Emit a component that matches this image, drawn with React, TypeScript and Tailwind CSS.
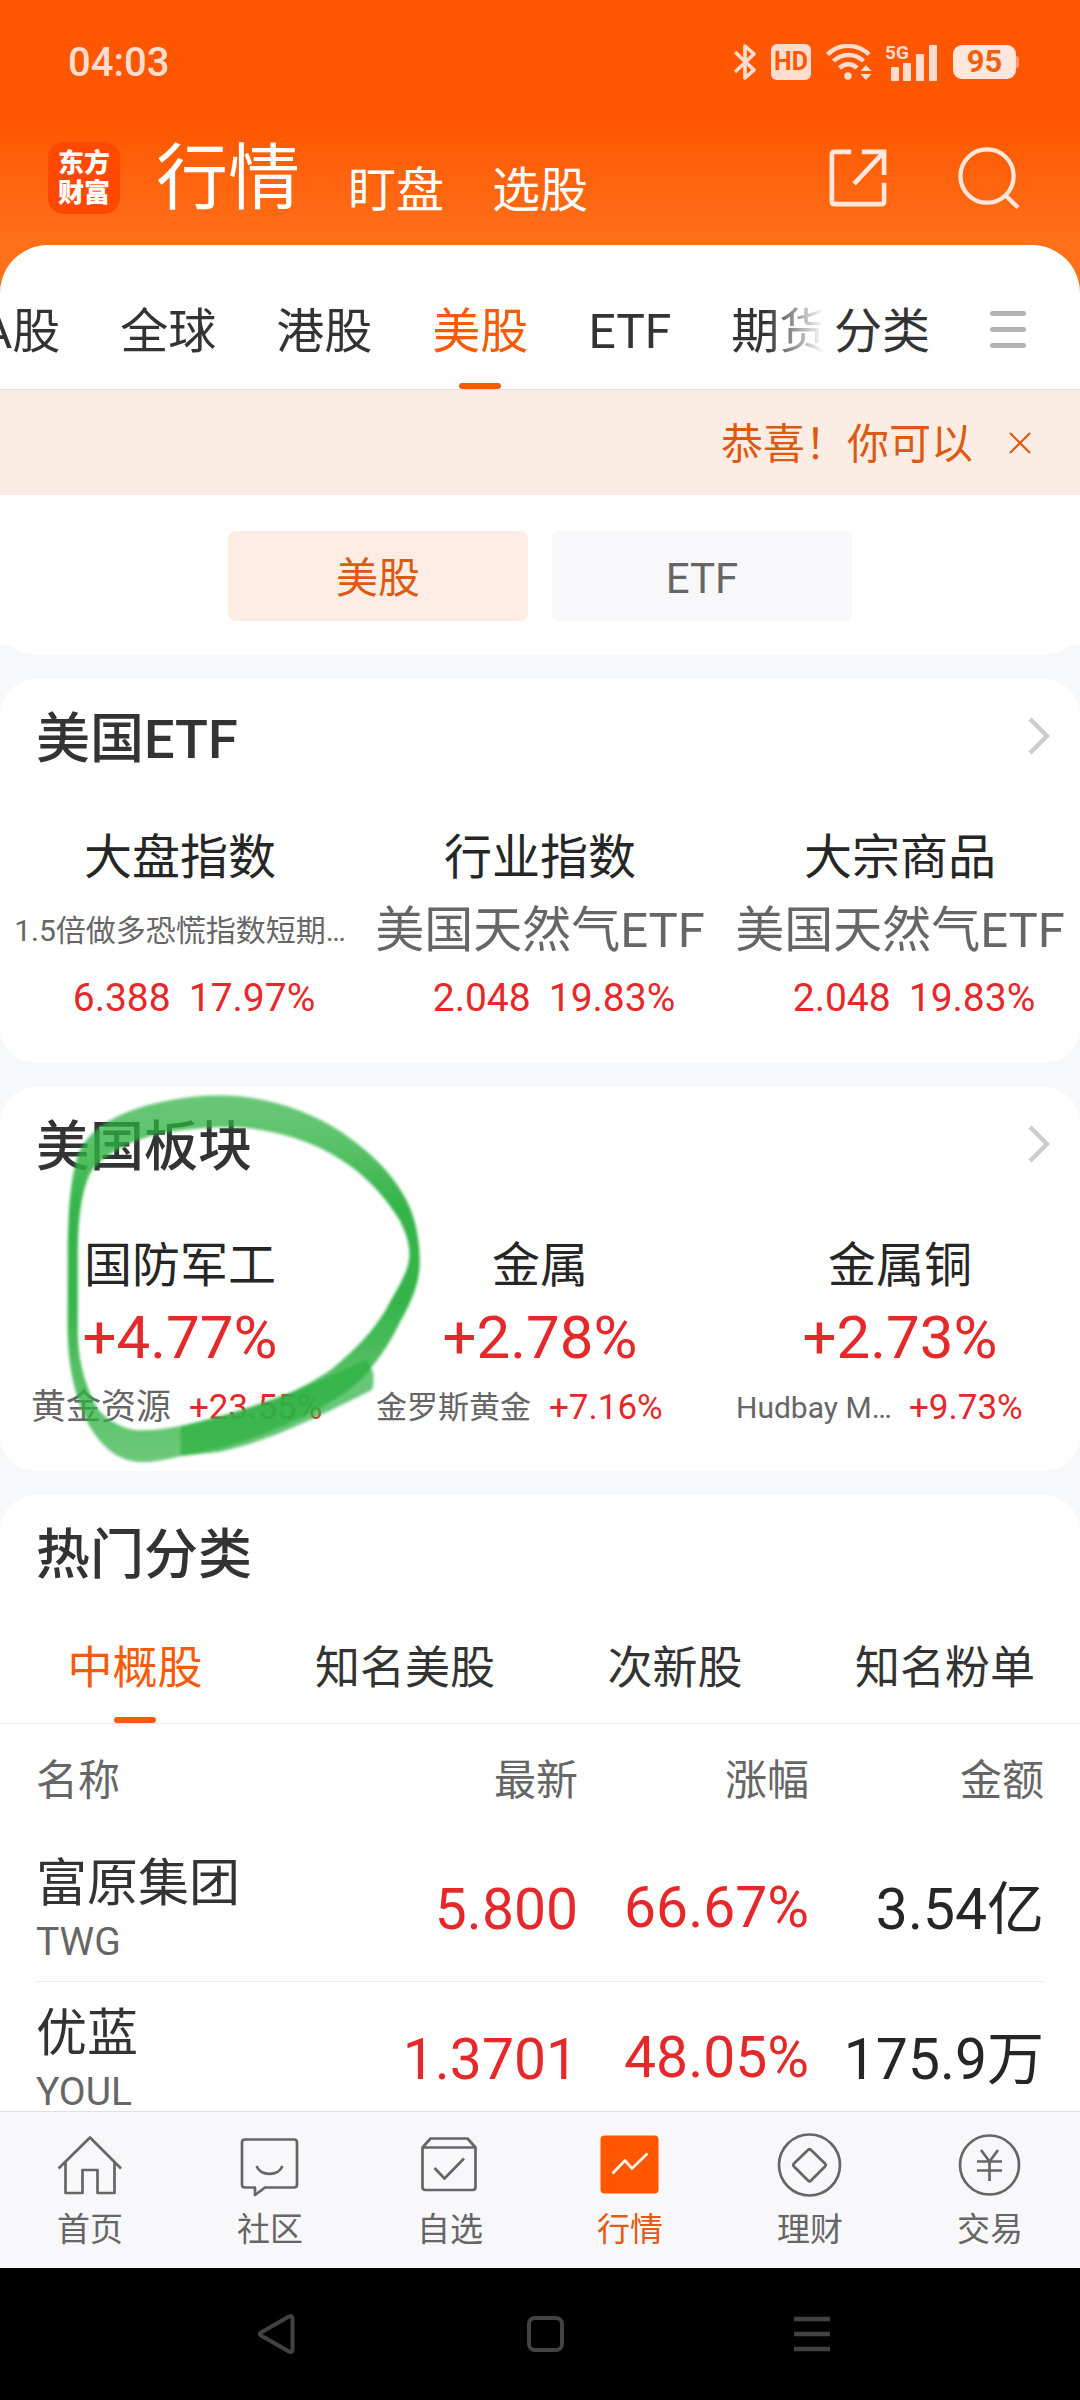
import React from 'react';

const RED = 'text-[#e5292a]';

interface EtfItem {
    title: string;
    name: string;
    small?: boolean;
    price: string;
    change: string;
}

const etfs: EtfItem[] = [
    { title: '大盘指数', name: '1.5倍做多恐慌指数短期…', small: true, price: '6.388', change: '17.97%' },
    { title: '行业指数', name: '美国天然气ETF', price: '2.048', change: '19.83%' },
    { title: '大宗商品', name: '美国天然气ETF', price: '2.048', change: '19.83%' },
];

const sectors = [
    { title: '国防军工', change: '+4.77%', leader: '黄金资源', leaderChange: '+23.55%', size: 'text-[35px]' },
    { title: '金属', change: '+2.78%', leader: '金罗斯黄金', leaderChange: '+7.16%', size: 'text-[31px]' },
    { title: '金属铜', change: '+2.73%', leader: 'Hudbay M…', leaderChange: '+9.73%', size: 'text-[30px]' },
];

const stocks = [
    { name: '富原集团', code: 'TWG', price: '5.800', change: '66.67%', amount: '3.54亿' },
    { name: '优蓝', code: 'YOUL', price: '1.3701', change: '48.05%', amount: '175.9万' },
];

const marketTabs = ['A股', '全球', '港股', '美股', 'ETF', '期货'];
const hotTabs = ['中概股', '知名美股', '次新股', '知名粉单'];

const StatusBar: React.FC = () => (
    <div className="flex h-[124px] items-center justify-between bg-[#ff5700] pl-[68px] pr-[61px] text-[#ffdccd]">
        <span className="pt-0.5 text-[40px] font-medium">04:03</span>
        <div className="flex items-center">
            <svg className="mr-[15px] h-9 w-[22px]" viewBox="0 0 22 36" fill="none" stroke="currentColor" strokeWidth="3.6" strokeLinejoin="round">
                <path d="M1 8 L20 26 L11 34 V2 L20 10 L1 28" />
            </svg>
            <span className="mr-[15px] flex h-9 w-10 items-center justify-center rounded-md bg-[#ffdccd] text-[25px] font-bold text-[#ff5700]">HD</span>
            <svg className="mr-[13px] h-9 w-[46px]" viewBox="0 0 46 36">
                <g fill="none" stroke="currentColor" strokeWidth="4.4">
                    <path d="M1.5 10.5 C13 -1 31 -1 43 10.5" />
                    <path d="M7.5 17 C16 9 29 9 37.5 17" />
                    <path d="M13.5 24 C19 19 26 19 31 24" />
                </g>
                <circle cx="22" cy="32" r="3.7" fill="currentColor" />
                <path d="M40 21 L45.5 27 H34.5Z M40 36 L45.5 30 H34.5Z" fill="currentColor" />
            </svg>
            <svg className="mr-4 h-[38px] w-[52px] overflow-visible" viewBox="0 0 52 38" fill="currentColor">
                <text x="0" y="16" fontSize="19" fontWeight="700">5G</text>
                <rect x="6" y="24" width="8" height="14" rx="1" />
                <rect x="18" y="20" width="8" height="18" rx="1" />
                <rect x="31" y="11" width="8" height="27" rx="1" />
                <rect x="44" y="2" width="8" height="36" rx="1" />
            </svg>
            <span className="flex h-[34px] w-[63px] items-center justify-center rounded-[9px] bg-[#ffe7dc] text-[31px] font-bold text-[#f2600f]">95</span>
            <span className="h-3 w-[3px] rounded-r bg-[#ff9a6b]" />
        </div>
    </div>
);

const TopBar: React.FC = () => (
    <header className="flex h-[121px] items-center bg-linear-to-b from-[#ff5700] to-[#ff7019] pb-[14px] pl-12 pr-[60px] text-white">
        <div className="flex h-[72px] w-[72px] flex-col items-center justify-center rounded-2xl bg-[#ff4800] text-[26px] leading-[30px] font-black">
            <span>东方</span>
            <span>财富</span>
        </div>
        <nav className="ml-9 flex flex-1 items-end gap-12 pt-0.5">
            <button className="text-[72px] leading-[80px]">行情</button>
            <button className="text-[48px] leading-[56px]">盯盘</button>
            <button className="text-[48px] leading-[56px]">选股</button>
        </nav>
        <button aria-label="分享" className="mr-[71px] text-[#ffe7dc]">
            <svg className="h-[58px] w-[58px]" viewBox="0 0 60 60" fill="none" stroke="currentColor" strokeWidth="4.8">
                <path d="M23 3 H6 Q3 3 3 6 V54 Q3 57 6 57 H54 Q57 57 57 54 V35" />
                <path d="M34 3 H57 V27 M56 4 L26 36" />
            </svg>
        </button>
        <button aria-label="搜索" className="text-[#ffe7dc]">
            <svg className="h-[62px] w-[62px]" viewBox="0 0 64 64" fill="none" stroke="currentColor" strokeWidth="4.4">
                <circle cx="30" cy="30" r="27.5" />
                <path d="M48 49 L62 62.5" />
            </svg>
        </button>
    </header>
);

const MarketTabs: React.FC = () => (
    <div className="bg-[#ff7019]">
        <div className="flex h-[145px] items-stretch rounded-t-[48px] border-b border-[#e0e0e0] bg-white pr-[54px] text-[48px] text-[#333]">
            <nav className="flex flex-1 gap-[60px] overflow-hidden [mask-image:linear-gradient(to_right,black_93%,transparent)]">
                {marketTabs.map((tab, i) => (
                    <button key={tab} className={`relative shrink-0 pt-[34px] pb-1 ${i === 0 ? '-ml-[19px]' : ''} ${tab === '美股' ? 'text-[#f75a08]' : ''}`}>
                        {tab}
                        {tab === '美股' && <span className="absolute bottom-0 left-1/2 h-[6px] w-[42px] -translate-x-1/2 rounded-full bg-[#f75a08]" />}
                    </button>
                ))}
            </nav>
            <button className="ml-2.5 pt-[34px] pb-1">分类</button>
            <button aria-label="菜单" className="ml-[60px] flex flex-col justify-center gap-[11px] pt-[28px] pb-1">
                <span className="h-[5px] w-9 rounded-full bg-[#b3b3b3]" />
                <span className="h-[5px] w-9 rounded-full bg-[#b3b3b3]" />
                <span className="h-[5px] w-9 rounded-full bg-[#b3b3b3]" />
            </button>
        </div>
    </div>
);

const Notice: React.FC = () => (
    <div className="flex h-[105px] items-center justify-end bg-[#fcede4] pr-[49px] text-[42px] text-[#dd5a12]">
        <span className="pt-1">恭喜！你可以</span>
        <button aria-label="关闭" className="ml-9">
            <svg className="h-[22px] w-[22px]" viewBox="0 0 22 22" fill="none" stroke="currentColor" strokeWidth="2.2">
                <path d="M1 1 L21 21 M21 1 L1 21" />
            </svg>
        </button>
    </div>
);

const CardHeader: React.FC<{ title: string; more?: boolean }> = ({ title, more = true }) => (
    <div className="flex h-[114px] items-center justify-between pl-9 pr-[30px]">
        <h2 className="pt-2 text-[54px] leading-[60px] font-medium text-[#333]">{title}</h2>
        {more && (
            <button aria-label={`查看${title}`}>
                <svg className="h-[38px] w-[22px]" viewBox="0 0 22 38" fill="none" stroke="#cccccc" strokeWidth="4.4">
                    <path d="M2 2 L19 19 L2 36" />
                </svg>
            </button>
        )}
    </div>
);

// Hand-drawn highlighter loop lying over the first sector
const MarkerLoop: React.FC = () => (
    <svg className="pointer-events-none absolute -top-[17px] left-0 h-[420px] w-[540px]" viewBox="0 0 1568 1260" preserveAspectRatio="none">
        <defs>
            <linearGradient id="ink" gradientUnits="userSpaceOnUse" x1="0" y1="76" x2="0" y2="1178">
                <stop offset="0" stopColor="#2db141" stopOpacity="0.72" />
                <stop offset="0.1" stopColor="#2db141" stopOpacity="0.76" />
                <stop offset="0.3" stopColor="#2db141" stopOpacity="0.96" />
                <stop offset="0.56" stopColor="#2db141" stopOpacity="0.96" />
                <stop offset="0.75" stopColor="#2db141" stopOpacity="0.82" />
                <stop offset="0.92" stopColor="#2db141" stopOpacity="0.74" />
                <stop offset="1" stopColor="#2db141" stopOpacity="0.7" />
            </linearGradient>
            <filter id="soft" x="-5%" y="-5%" width="110%" height="110%">
                <feGaussianBlur stdDeviation="4" />
            </filter>
        </defs>
        <g filter="url(#soft)">
            <path
                fill="url(#ink)"
                fillRule="evenodd"
                d="M197 560 C197 430 205 330 222 270 C240 200 300 150 400 115 C480 88 570 76 640 76 C780 78 900 125 990 185 C1080 250 1140 310 1180 390 C1210 450 1219 520 1219 580 C1217 660 1180 720 1150 780 C1130 820 1105 860 1080 890 C1040 950 960 1000 880 1040 C760 1100 640 1145 525 1158 C480 1170 440 1178 400 1176 C330 1170 285 1115 255 1060 C215 980 197 880 196 780 Z
                   M226 560 C226 450 235 370 262 310 C290 260 370 215 450 195 C540 175 640 168 720 174 C850 190 950 235 1020 290 C1090 345 1130 400 1160 450 C1185 500 1189 530 1189 560 C1185 610 1150 660 1120 720 C1080 790 1020 850 960 900 C900 940 840 975 760 1000 C680 1030 600 1050 525 1068 C480 1076 440 1084 390 1080 C340 1070 300 1040 280 1010 C240 930 226 860 226 780 Z"
            />
            <path fill="#2db141" fillOpacity="0.72" d="M525 1068 C700 1030 880 960 1065 868 L1083 905 Q1088 940 1080 960 C960 1020 800 1110 640 1145 L525 1158 Z" />
        </g>
    </svg>
);

const EtfCard: React.FC = () => (
    <section className="rounded-[36px] bg-white pb-[38px]">
        <CardHeader title="美国ETF" />
        <div className="grid grid-cols-3 pt-8">
            {etfs.map((item) => (
                <div key={item.title} className="flex flex-col items-center whitespace-nowrap">
                    <span className="text-[48px] leading-[66px] text-[#262626]">{item.title}</span>
                    <span className={`leading-[80px] text-[#666] ${item.small ? 'text-[30px]' : 'text-[49px]'}`}>{item.name}</span>
                    <span className={`flex gap-[18px] pl-[28px] text-[39px] leading-[54px] ${RED}`}>
                        <span>{item.price}</span>
                        <span>{item.change}</span>
                    </span>
                </div>
            ))}
        </div>
    </section>
);

const SectorCard: React.FC = () => (
    <section className="relative mt-6 rounded-[36px] bg-white pb-8">
        <CardHeader title="美国板块" />
        <div className="grid grid-cols-3 pt-8">
            {sectors.map((item) => (
                <div key={item.title} className="flex flex-col items-center whitespace-nowrap">
                    <span className="text-[48px] leading-[66px] text-[#262626]">{item.title}</span>
                    <span className={`text-[60px] leading-[78px] ${RED}`}>{item.change}</span>
                    <span className="flex w-full items-center gap-[18px] pl-4 leading-[62px]">
                        <span className={`w-[155px] text-right text-[#666] ${item.size}`}>{item.leader}</span>
                        <span className={`text-[35px] ${RED}`}>{item.leaderChange}</span>
                    </span>
                </div>
            ))}
        </div>
        <MarkerLoop />
    </section>
);

const HotCard: React.FC = () => (
    <section className="mt-6 rounded-t-[36px] bg-white">
        <CardHeader title="热门分类" more={false} />
        <nav className="grid h-[115px] grid-cols-4 border-b border-[#ebebeb] text-[45px] text-[#333]">
            {hotTabs.map((tab, i) => (
                <button key={tab} className={`relative pt-1.5 ${i === 0 ? 'text-[#f75a08]' : ''}`}>
                    {tab}
                    {i === 0 && <span className="absolute bottom-0 left-1/2 h-[6px] w-[42px] -translate-x-1/2 rounded-full bg-[#f75a08]" />}
                </button>
            ))}
        </nav>
        <div className="px-9">
            <table className="w-full table-fixed text-right">
                <thead>
                    <tr className="h-[107px] text-[42px] text-[#666]">
                        <th className="pt-1.5 text-left font-normal">名称</th>
                        <th className="w-[242px] pt-1.5 font-normal">最新</th>
                        <th className="w-[231px] pt-1.5 font-normal">涨幅</th>
                        <th className="w-[235px] pt-1.5 font-normal">金额</th>
                    </tr>
                </thead>
                <tbody>
                    {stocks.map((stock) => (
                        <tr key={stock.code} className="h-[150px] border-b border-[#ebebeb] text-[57px] whitespace-nowrap">
                            <td className="pt-2 text-left">
                                <div className="text-[51px] leading-[64px] text-[#333]">{stock.name}</div>
                                <div className="text-[39px] leading-[52px] text-[#666]">{stock.code}</div>
                            </td>
                            <td className={`pt-2 ${RED}`}>{stock.price}</td>
                            <td className={`pt-1 ${RED}`}>{stock.change}</td>
                            <td className="pt-2 text-[#262626]">{stock.amount}</td>
                        </tr>
                    ))}
                </tbody>
            </table>
        </div>
    </section>
);

const navItems: { label: string; active?: boolean; icon: React.ReactNode }[] = [
    {
        label: '首页',
        icon: <path d="M1.5 36.5 L33 5.5 L64 36.5 M8.5 30 V61 H25.5 V38 H40.5 V61 H57.5 V30" />,
    },
    {
        label: '社区',
        icon: <path d="M8 7.5 H57 Q60 7.5 60 10.5 V52.5 Q60 55.5 57 55.5 H28 L18 63 V55.5 H8 Q5 55.5 5 52.5 V10.5 Q5 7.5 8 7.5 Z M19.5 34 C24 44.5 41 44.5 45.5 34" />,
    },
    {
        label: '自选',
        icon: <path d="M5.5 15.5 L13.5 6.5 H50.5 L58.5 15.5 V55 Q58.5 58 55.5 58 H8.5 Q5.5 58 5.5 55 V15.5 H58.5 M17.5 36 L27.5 46.5 L47 26.5" />,
    },
    {
        label: '行情',
        active: true,
        icon: (
            <>
                <rect x="3.5" y="3.5" width="58" height="58" rx="4" fill="#ff5700" stroke="none" />
                <path d="M15.5 41.5 L28 28.5 L35 36.5 L50.5 21.5" stroke="#fff3ea" />
            </>
        ),
    },
    {
        label: '理财',
        icon: (
            <>
                <circle cx="32.5" cy="33" r="30.5" />
                <path d="M31 18 Q32.5 16.5 34 18 L48 31.5 Q49.5 33 48 34.5 L34 48.5 Q32.5 50 31 48.5 L17 34.5 Q15.5 33 17 31.5 Z" />
            </>
        ),
    },
    {
        label: '交易',
        icon: (
            <>
                <circle cx="32.5" cy="33" r="29.5" />
                <path d="M24 18 L32.5 29.5 L41 18 M20 29.5 H45 M20 38.5 H45 M32.5 29.5 V49" />
            </>
        ),
    },
];

const BottomNav: React.FC = () => (
    <nav className="grid h-[157px] shrink-0 grid-cols-6 border-t border-[#e0e0e3] bg-[#f8f8fb]">
        {navItems.map((item) => (
            <button key={item.label} className={`flex flex-col items-center pt-5 text-[33px] leading-[36px] ${item.active ? 'text-[#e8590c]' : 'text-[#666]'}`}>
                <svg className="mb-3.5 h-[66px] w-[66px]" viewBox="0 0 66 66" fill="none" stroke="currentColor" strokeWidth="2.7" strokeLinejoin="round">
                    {item.icon}
                </svg>
                {item.label}
            </button>
        ))}
    </nav>
);

const SystemBar: React.FC = () => (
    <div className="flex h-[132px] shrink-0 items-center justify-center gap-[228px] bg-black pl-2 text-[#424242]">
        <button aria-label="返回">
            <svg className="h-10 w-10" viewBox="0 0 40 40" fill="none" stroke="currentColor" strokeWidth="4" strokeLinejoin="round">
                <path d="M33 2.5 Q36.5 1 36.5 5 V35 Q36.5 39 33 37.5 L5 21.5 Q2.5 20 5 18.5 Z" />
            </svg>
        </button>
        <button aria-label="主屏幕">
            <svg className="h-10 w-10" viewBox="0 0 40 40" fill="none" stroke="currentColor" strokeWidth="4">
                <rect x="5" y="4" width="33" height="32" rx="6" />
            </svg>
        </button>
        <button aria-label="最近任务">
            <svg className="h-10 w-10" viewBox="0 0 40 40" fill="none" stroke="currentColor" strokeWidth="4.5">
                <path d="M2 5 H38 M2 20 H38 M2 35 H38" />
            </svg>
        </button>
    </div>
);

const App: React.FC = () => {
    return (
        <div className="flex h-screen flex-col bg-[#f7f8fa] font-['Roboto','Noto_Sans_CJK_SC',sans-serif]" lang="zh-CN">
            <StatusBar />
            <TopBar />
            <main className="min-h-0 flex-1 overflow-hidden">
                <MarketTabs />
                <Notice />
                <div className="flex h-[150px] items-start justify-center gap-6 bg-white pt-9 text-[42px]">
                    <button className="h-[90px] w-[300px] rounded-lg bg-[#ffede5] pt-1 text-[#dd5a12]">美股</button>
                    <button className="h-[90px] w-[300px] rounded-lg bg-[#f8f8fb] pt-1 text-[#666]">ETF</button>
                </div>
                <div className="mb-6 flex h-[10px] items-end overflow-hidden">
                    <div className="h-[72px] flex-1 shrink-0 rounded-b-[36px] bg-white" />
                </div>
                <EtfCard />
                <SectorCard />
                <HotCard />
            </main>
            <BottomNav />
            <SystemBar />
        </div>
    );
};

export default App;
